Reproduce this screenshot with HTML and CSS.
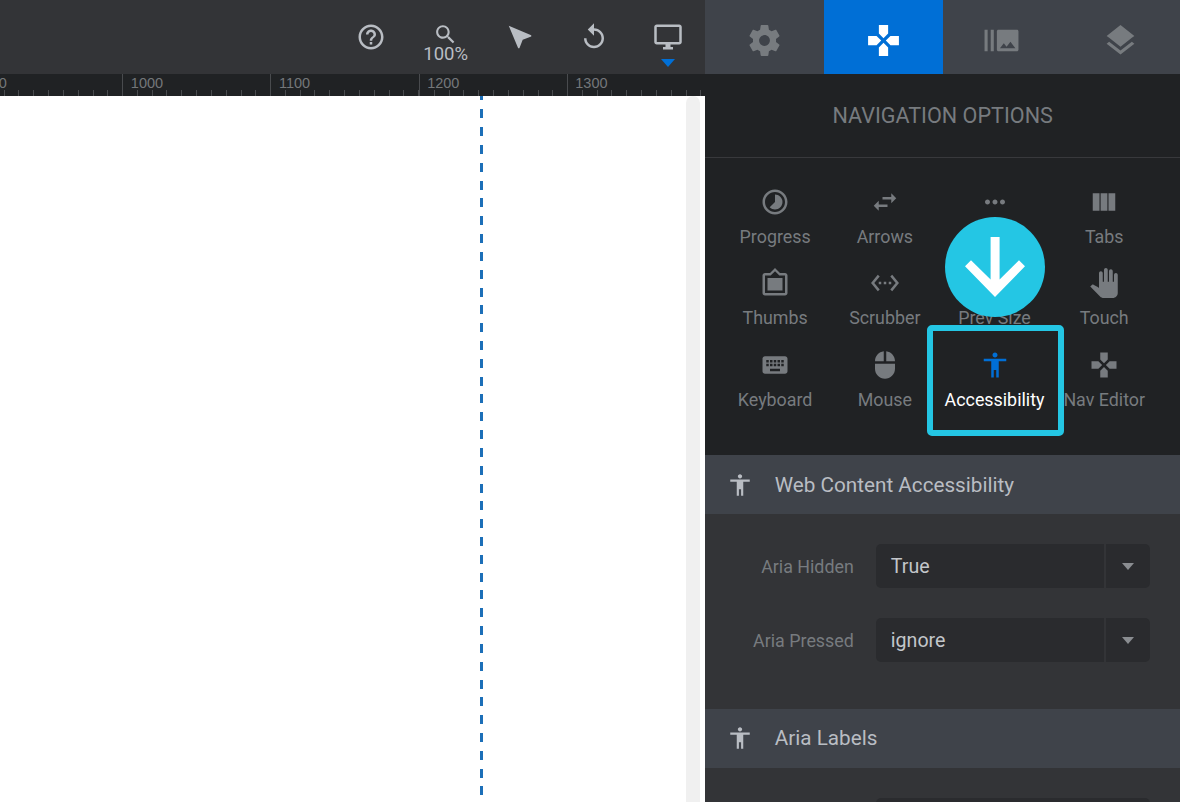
FILE: index.html
```html
<!DOCTYPE html>
<html lang="en">
<head>
    <meta charset="UTF-8">
    <meta name="viewport" content="width=device-width, initial-scale=1.0">
    <title>Slider Editor - Navigation Options</title>
    <link rel="stylesheet" href="styles.css">
</head>
<body>
    <!-- Shared icons -->
    <svg class="icon-defs" width="0" height="0">
        <symbol id="gamepad" viewBox="0 0 24 24"><path d="M15 7.5V2H9v5.5l3 3 3-3zM7.5 9H2v6h5.5l3-3-3-3zM9 16.5V22h6v-5.5l-3-3-3 3zM16.5 9l-3 3 3 3H22V9h-5.5z"/></symbol>
        <symbol id="accessibility" viewBox="0 0 24 24"><path d="M12 2c1.1 0 2 .9 2 2s-.9 2-2 2-2-.9-2-2 .9-2 2-2zm9 7h-6v13h-2v-6h-2v6H9V9H3V7h18v2z"/></symbol>
    </svg>

    <div class="editor">
        <section class="workspace">
            <header class="toolbar">
                <button class="tool"><svg viewBox="0 0 24 24"><path d="M11 18h2v-2h-2v2zm1-16C6.48 2 2 6.48 2 12s4.48 10 10 10 10-4.48 10-10S17.52 2 12 2zm0 18c-4.41 0-8-3.59-8-8s3.59-8 8-8 8 3.59 8 8-3.59 8-8 8zm0-14c-2.21 0-4 1.79-4 4h2c0-1.1.9-2 2-2s2 .9 2 2c0 2-3 1.75-3 5h2c0-2.25 3-2.5 3-5 0-2.21-1.79-4-4-4z"/></svg></button>
                <button class="tool zoom">
                    <svg viewBox="0 0 24 24"><path d="M15.5 14h-.79l-.28-.27C15.41 12.59 16 11.11 16 9.5 16 5.91 13.09 3 9.5 3S3 5.91 3 9.5 5.91 16 9.5 16c1.61 0 3.09-.59 4.23-1.57l.27.28v.79l5 4.99L20.49 19l-4.99-5zm-6 0C7.01 14 5 11.99 5 9.5S7.01 5 9.5 5 14 7.01 14 9.5 11.99 14 9.5 14z"/></svg>
                    <span>100%</span>
                </button>
                <button class="tool"><svg viewBox="0 0 24 24"><path d="M3 3l18 7.53v.98l-6.84 2.65L11.52 21h-.98L3 3z"/></svg></button>
                <button class="tool"><svg viewBox="0 0 24 24"><path d="M12 5V1L7 6l5 5V7c3.31 0 6 2.69 6 6s-2.69 6-6 6-6-2.69-6-6H4c0 4.42 3.58 8 8 8s8-3.58 8-8-3.58-8-8-8z"/></svg></button>
                <button class="tool device">
                    <svg viewBox="0 0 24 24"><path d="M21 2H3c-1.1 0-2 .9-2 2v12c0 1.1.9 2 2 2h7v2H8v2h8v-2h-2v-2h7c1.1 0 2-.9 2-2V4c0-1.1-.9-2-2-2zm0 14H3V4h18v12z"/></svg>
                    <i class="caret"></i>
                </button>
            </header>
            <div class="ruler">
                <span>900</span>
                <span>1000</span>
                <span>1100</span>
                <span>1200</span>
                <span>1300</span>
            </div>
            <div class="canvas">
                <div class="guide"></div>
                <div class="scrollbar"></div>
            </div>
        </section>

        <aside class="panel">
            <nav class="tabs">
                <a class="tab"><svg viewBox="0 0 24 24"><path d="M19.43 12.98c.04-.32.07-.64.07-.98s-.03-.66-.07-.98l2.11-1.65c.19-.15.24-.42.12-.64l-2-3.46c-.12-.22-.39-.3-.61-.22l-2.49 1c-.52-.4-1.08-.73-1.69-.98l-.38-2.65C14.46 2.18 14.25 2 14 2h-4c-.25 0-.46.18-.49.42l-.38 2.65c-.61.25-1.17.59-1.69.98l-2.49-1c-.23-.09-.49 0-.61.22l-2 3.46c-.13.22-.07.49.12.64l2.11 1.65c-.04.32-.07.65-.07.98s.03.66.07.98l-2.11 1.65c-.19.15-.24.42-.12.64l2 3.46c.12.22.39.3.61.22l2.49-1c.52.4 1.08.73 1.69.98l.38 2.65c.03.24.24.42.49.42h4c.25 0 .46-.18.49-.42l.38-2.65c.61-.25 1.17-.59 1.69-.98l2.49 1c.23.09.49 0 .61-.22l2-3.46c.12-.22.07-.49-.12-.64l-2.11-1.65zM12 15.5c-1.93 0-3.5-1.57-3.5-3.5s1.57-3.5 3.5-3.5 3.5 1.57 3.5 3.5-1.57 3.5-3.5 3.5z"/></svg></a>
                <a class="tab active"><svg><use href="#gamepad"/></svg></a>
                <a class="tab"><svg viewBox="0 0 24 24"><path d="M1 5h2v14H1zm4 0h2v14H5zm17 0H10c-.55 0-1 .45-1 1v12c0 .55.45 1 1 1h12c.55 0 1-.45 1-1V6c0-.55-.45-1-1-1zM11 17l2.5-3.15L15.29 16l2.5-3.22L21 17H11z"/></svg></a>
                <a class="tab"><svg viewBox="0 0 24 24"><path d="M11.99 18.54l-7.37-5.73L3 14.07l9 7 9-7-1.63-1.27-7.38 5.74zM12 16l7.36-5.73L21 9l-9-7-9 7 1.63 1.27L12 16z"/></svg></a>
            </nav>

            <h1 class="panel-title">NAVIGATION OPTIONS</h1>

            <div class="options">
                <a class="option">
                    <svg viewBox="0 0 24 24"><path d="M16.24 7.76C15.07 6.59 13.54 6 12 6v6l-4.24 4.24c2.34 2.34 6.14 2.34 8.49 0 2.34-2.34 2.34-6.14-.01-8.48zM12 2C6.48 2 2 6.48 2 12s4.48 10 10 10 10-4.48 10-10S17.52 2 12 2zm0 18c-4.42 0-8-3.58-8-8s3.58-8 8-8 8 3.58 8 8-3.58 8-8 8z"/></svg>
                    <span>Progress</span>
                </a>
                <a class="option">
                    <svg viewBox="0 0 24 24"><path d="M6.99 11L3 15l3.99 4v-3H14v-2H6.99v-3zM21 9l-3.99-4v3H10v2h7.01v3L21 9z"/></svg>
                    <span>Arrows</span>
                </a>
                <a class="option">
                    <svg viewBox="0 0 24 24"><path d="M6 10c-1.1 0-2 .9-2 2s.9 2 2 2 2-.9 2-2-.9-2-2-2zm12 0c-1.1 0-2 .9-2 2s.9 2 2 2 2-.9 2-2-.9-2-2-2zm-6 0c-1.1 0-2 .9-2 2s.9 2 2 2 2-.9 2-2-.9-2-2-2z"/></svg>
                </a>
                <a class="option">
                    <svg viewBox="0 0 24 24"><path d="M3 5h5.4v14H3zM9.3 5h5.4v14H9.3zM15.6 5H21v14h-5.4z"/></svg>
                    <span>Tabs</span>
                </a>
                <a class="option">
                    <svg viewBox="0 0 24 24"><path d="M20 4h-4l-4-4-4 4H4c-1.1 0-2 .9-2 2v14c0 1.1.9 2 2 2h16c1.1 0 2-.9 2-2V6c0-1.1-.9-2-2-2zm0 16H4V6h4.52l3.52-3.5L15.48 6H20v14zM18 8H6v10h12z"/></svg>
                    <span>Thumbs</span>
                </a>
                <a class="option">
                    <svg viewBox="0 0 24 24"><path d="M7.77 6.76L6.23 5.48.82 12l5.41 6.52 1.54-1.28L3.42 12l4.35-5.24zM7 13h2v-2H7v2zm10-2h-2v2h2v-2zm-6 2h2v-2h-2v2zm6.77-7.52l-1.54 1.28L20.58 12l-4.35 5.24 1.54 1.28L23.18 12l-5.41-6.52z"/></svg>
                    <span>Scrubber</span>
                </a>
                <a class="option">
                    <svg viewBox="0 0 24 24"></svg>
                    <span>Prev Size</span>
                </a>
                <a class="option">
                    <svg viewBox="0 0 24 24"><path d="M23 5.5V20c0 2.2-1.8 4-4 4h-7.3c-1.08 0-2.1-.43-2.85-1.19L1 14.83s1.26-1.23 1.3-1.25c.22-.19.49-.29.79-.29.22 0 .42.06.6.16.04.01 4.31 2.46 4.31 2.46V4c0-.83.67-1.5 1.5-1.5S11 3.17 11 4v7h1V1.5c0-.83.67-1.5 1.5-1.5S15 .67 15 1.5V11h1V2.5c0-.83.67-1.5 1.5-1.5s1.5.67 1.5 1.5V11h1V5.5c0-.83.67-1.5 1.5-1.5s1.5.67 1.5 1.5z"/></svg>
                    <span>Touch</span>
                </a>
                <a class="option">
                    <svg viewBox="0 0 24 24"><path d="M20 5H4c-1.1 0-1.99.9-1.99 2L2 17c0 1.1.9 2 2 2h16c1.1 0 2-.9 2-2V7c0-1.1-.9-2-2-2zm-9 3h2v2h-2V8zm0 3h2v2h-2v-2zM8 8h2v2H8V8zm0 3h2v2H8v-2zm-1 2H5v-2h2v2zm0-3H5V8h2v2zm9 7H8v-2h8v2zm0-4h-2v-2h2v2zm0-3h-2V8h2v2zm3 3h-2v-2h2v2zm0-3h-2V8h2v2z"/></svg>
                    <span>Keyboard</span>
                </a>
                <a class="option">
                    <svg viewBox="0 0 24 24"><path d="M13 1.07V9h7c0-4.08-3.05-7.44-7-7.93zM4 15c0 4.42 3.58 8 8 8s8-3.58 8-8v-4H4v4zm7-13.93C7.05 1.56 4 4.92 4 9h7V1.07z"/></svg>
                    <span>Mouse</span>
                </a>
                <a class="option active">
                    <svg><use href="#accessibility"/></svg>
                    <span>Accessibility</span>
                    <div class="highlight"></div>
                    <div class="pointer"><svg viewBox="0 0 60 60"><path d="M25.6 0h9v42.6L54 23.2l6 6L30 60 0 29.2l6-6 19.6 19.4z"/></svg></div>
                </a>
                <a class="option">
                    <svg><use href="#gamepad"/></svg>
                    <span>Nav Editor</span>
                </a>
            </div>

            <h2 class="section-title"><svg><use href="#accessibility"/></svg>Web Content Accessibility</h2>
            <div class="fields">
                <div class="field">
                    <label>Aria Hidden</label>
                    <div class="select"><span>True</span><i class="arrow"></i></div>
                </div>
                <div class="field">
                    <label>Aria Pressed</label>
                    <div class="select"><span>ignore</span><i class="arrow"></i></div>
                </div>
            </div>

            <h2 class="section-title"><svg><use href="#accessibility"/></svg>Aria Labels</h2>
            <div class="fields">
                <div class="field">
                    <label></label>
                    <div class="select"></div>
                </div>
            </div>
        </aside>
    </div>
</body>
</html>
```
FILE: styles.css
```css
:root {
    --blue: #006fd6;
    --cyan: #24c6e4;
    --dark: #202224;
    --bar: #333437;
    --slate: #3f434a;
    --muted: #777b7f;
    --light: #b9bdc3;
}

* {
    margin: 0;
    padding: 0;
    box-sizing: border-box;
}

body {
    font-family: Roboto, sans-serif;
    background: var(--bar);
    overflow: hidden;
}

svg {
    fill: currentColor;
    display: block;
    flex-shrink: 0;
}

.icon-defs {
    position: absolute;
}

.editor {
    display: flex;
    height: 802px;
    overflow: hidden;
}

.workspace {
    width: 705.3px;
    display: flex;
    flex-direction: column;
    flex-shrink: 0;
    overflow: hidden;
}

/* Toolbar */
.toolbar {
    height: 74px;
    flex-shrink: 0;
    background: var(--bar);
    display: flex;
    justify-content: flex-end;
}

.tool {
    width: 74.2px;
    padding-top: 22px;
    border: none;
    background: none;
    color: var(--light);
    display: flex;
    flex-direction: column;
    align-items: center;
}

.tool svg {
    width: 30px;
    height: 30px;
}

.zoom svg {
    width: 25px;
    height: 25px;
    margin-bottom: -3px;
}

.zoom span {
    font: 18.5px/21px Roboto, sans-serif;
}

.caret {
    border: 7.5px solid transparent;
    border-top: 8px solid var(--blue);
    border-bottom: none;
    margin-top: 6.5px;
}

/* Ruler */
.ruler {
    height: 22px;
    flex-shrink: 0;
    background: var(--dark);
    display: flex;
    margin-left: -25.8px;
}

.ruler span {
    width: 148.15px;
    flex-shrink: 0;
    padding-left: 7.5px;
    border-left: 1px solid #494b4e;
    color: #74777a;
    font: 14.5px/19px "Liberation Sans", sans-serif;
    background: repeating-linear-gradient(to right, transparent 0 13.815px, #494b4e 13.815px 14.815px) 0 100% / 100% 6px no-repeat;
}

.canvas {
    flex: 1;
    background: #fff;
    display: flex;
    justify-content: flex-end;
}

.guide {
    width: 3px;
    margin-right: 203px;
    background: repeating-linear-gradient(to bottom, #1c6fb8 0 4.5px, transparent 4.5px 13.32px, #1c6fb8 13.32px 17.82px);
}

.scrollbar {
    width: 14px;
    margin-right: 5.3px;
    border-radius: 7px 7px 0 0;
    background: #f0f0f0;
}

/* Side panel */
.panel {
    flex: 1;
    background: var(--dark);
}

.tabs {
    display: flex;
    height: 74px;
    background: var(--slate);
}

.tab {
    flex: 1;
    display: flex;
    align-items: center;
    justify-content: center;
    padding-top: 7px;
    color: var(--muted);
}

.tab svg {
    width: 37px;
    height: 37px;
}

.tab.active {
    background: var(--blue);
    color: #fff;
}

.panel-title {
    height: 84px;
    border-bottom: 1px solid #38393c;
    color: var(--muted);
    font-size: 21.6px;
    font-weight: 400;
    line-height: 83px;
    text-align: center;
}

.options {
    display: grid;
    grid-template-columns: repeat(4, 109.7px);
    grid-auto-rows: 81.5px;
    height: 297px;
    padding: 28.5px 0 0 15px;
}

.option {
    position: relative;
    display: flex;
    flex-direction: column;
    align-items: center;
    color: var(--muted);
    white-space: nowrap;
}

.option > svg {
    width: 30px;
    height: 30px;
    overflow: visible;
}

.option > span {
    margin-top: 8px;
    font-size: 17.85px;
    line-height: 24px;
}

.option.active {
    color: var(--blue);
    z-index: 1;
}

.option.active > span {
    color: #fff;
}

.highlight {
    position: absolute;
    left: -13px;
    top: -24.5px;
    width: 137px;
    height: 110.5px;
    border: 6px solid var(--cyan);
    border-radius: 5px;
}

.pointer {
    position: absolute;
    left: 5.5px;
    top: -132.5px;
    width: 100px;
    height: 100px;
    padding: 20px;
    border-radius: 50%;
    background: var(--cyan);
    color: #fff;
}

.section-title {
    display: flex;
    align-items: center;
    height: 59px;
    padding-left: 22px;
    background: var(--slate);
    color: var(--light);
    font-size: 20.7px;
    font-weight: 400;
}

.section-title svg {
    width: 26px;
    height: 26px;
    margin-right: 21.5px;
}

.fields {
    height: 194.5px;
    padding: 30px 0 0 14.5px;
    background: var(--bar);
}

.field {
    display: flex;
    align-items: center;
    margin-bottom: 30px;
}

.field label {
    width: 134px;
    margin-right: 22px;
    padding-top: 1px;
    color: var(--muted);
    font-size: 17.85px;
    text-align: right;
}

.select {
    width: 274px;
    height: 44px;
    padding-left: 15px;
    border-radius: 5px;
    background: #2a2b2e;
    color: #c3c6ca;
    font-size: 19.6px;
    display: flex;
    align-items: center;
    justify-content: space-between;
}

.arrow {
    width: 46px;
    height: 44px;
    border-left: 2px solid var(--bar);
    display: flex;
    align-items: center;
    justify-content: center;
}

.arrow::before {
    content: "";
    border: 6px solid transparent;
    border-top: 7px solid #8a8d91;
    border-bottom: none;
}
```
